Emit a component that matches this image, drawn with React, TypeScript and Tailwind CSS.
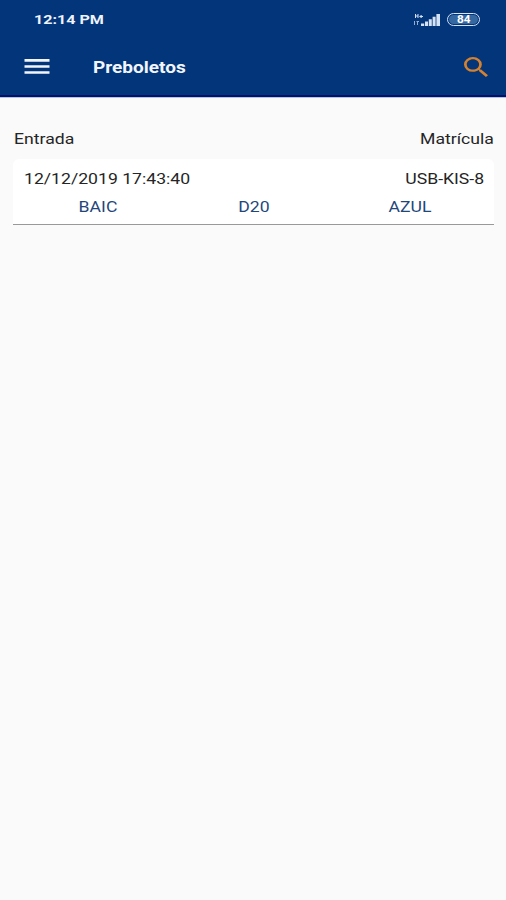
import type { ReactNode } from "react";

function Wide({ children, className = "" }: { children: ReactNode; className?: string }) {
  return <span className={`block scale-x-[1.175] whitespace-nowrap ${className}`}>{children}</span>;
}

function Signal() {
  return (
    <svg width="28" height="14" viewBox="0 0 28 14" fill="#d5e2f6">
      <path d="M2 1h1v1.5h1.5V1h1v4h-1V3.5H3V5H2zM7.5 2h1.2v1H10v1H8.700v1H7.500V4H6.400V3h1.100z" />
      <path d="M1 8h1v4H1zM3.500 8H6v1H5v3H4V9h-.5z" opacity=".7" />
      <path d="M8 10.400h3.200V13H8zM12 8.400h3V13h-3zM15.800 6.200h3V13h-3zM19.600 3.800h3V13h-3zM23.400 1H27v12h-3.600z" />
    </svg>
  );
}

function StatusBar() {
  return (
    <div className="flex h-[39px] items-center justify-between pr-[26px] pl-[34px]">
      <Wide className="origin-left text-[13.7px] font-bold text-[#eef3fb]">12:14 PM</Wide>
      <div className="flex items-center gap-[6px]">
        <Signal />
        <div className="flex h-[13px] w-[33px] items-center justify-center rounded-full border-[1.5px] border-[#d5e2f6] p-px">
          <div className="flex h-full w-full items-center justify-center rounded-full bg-[#3567a0] pt-px text-[10px] leading-none font-bold text-white">
            <Wide>84</Wide>
          </div>
        </div>
      </div>
    </div>
  );
}

function Toolbar() {
  return (
    <div className="flex h-[56px] items-center pr-[18px] pl-[24px]">
      <svg className="mb-px" width="26" height="17" viewBox="0 0 26 17" fill="#f2f5fb">
        <path d="M.5 1h25v2.700H.5zM.5 7.200h25v2.500H.5zM.5 13.200h25v2.600H.5z" />
      </svg>
      <Wide className="mt-[3px] ml-[43px] origin-left text-[16.200px] font-bold text-[#f2f5fb]">Preboletos</Wide>
      <svg className="mb-px ml-auto" width="24" height="20" viewBox="3 3 17.49 17.49" preserveAspectRatio="none" fill="#d5822f">
        <path d="M15.5 14h-.79l-.28-.27A6.47 6.47 0 0 0 16 9.5 6.5 6.5 0 1 0 9.5 16c1.61 0 3.09-.59 4.23-1.57l.27.28v.79l5 4.99L20.49 19l-4.99-5zm-6 0C7.01 14 5 11.99 5 9.5S7.01 5 9.5 5 14 7.01 14 9.5 11.99 14 9.5 14z" />
      </svg>
    </div>
  );
}

export default function App() {
  return (
    <div className="flex h-[900px] w-[506px] flex-col bg-[#fafafa] font-[Roboto,sans-serif] text-[15px] text-[#252525]">
      <header className="h-[98px] border-b border-[#b9c3dc] bg-[#03357b]">
        <StatusBar />
        <Toolbar />
        <div className="h-[2px] bg-[#00116f]" />
      </header>
      <main className="pt-[30px] pr-[12px] pl-[13px]">
        <div className="flex h-[22px] items-center justify-between pl-px">
          <Wide className="origin-left">Entrada</Wide>
          <Wide className="origin-right">Matrícula</Wide>
        </div>
        <section className="mt-[9px] h-[66px] rounded-t-[6px] border-b border-[#999] bg-white pt-[10px]">
          <div className="flex h-5 items-center justify-between pr-[10px] pl-[11px]">
            <Wide className="origin-left">12/12/2019 17:43:40</Wide>
            <Wide className="origin-right scale-x-[1.19]">USB-KIS-8</Wide>
          </div>
          <div className="mt-[7px] grid h-5 grid-cols-3 items-center pr-[6px] pl-[7px] text-center text-[#1f477b]">
            <Wide>BAIC</Wide>
            <Wide>D20</Wide>
            <Wide>AZUL</Wide>
          </div>
        </section>
      </main>
    </div>
  );
}
